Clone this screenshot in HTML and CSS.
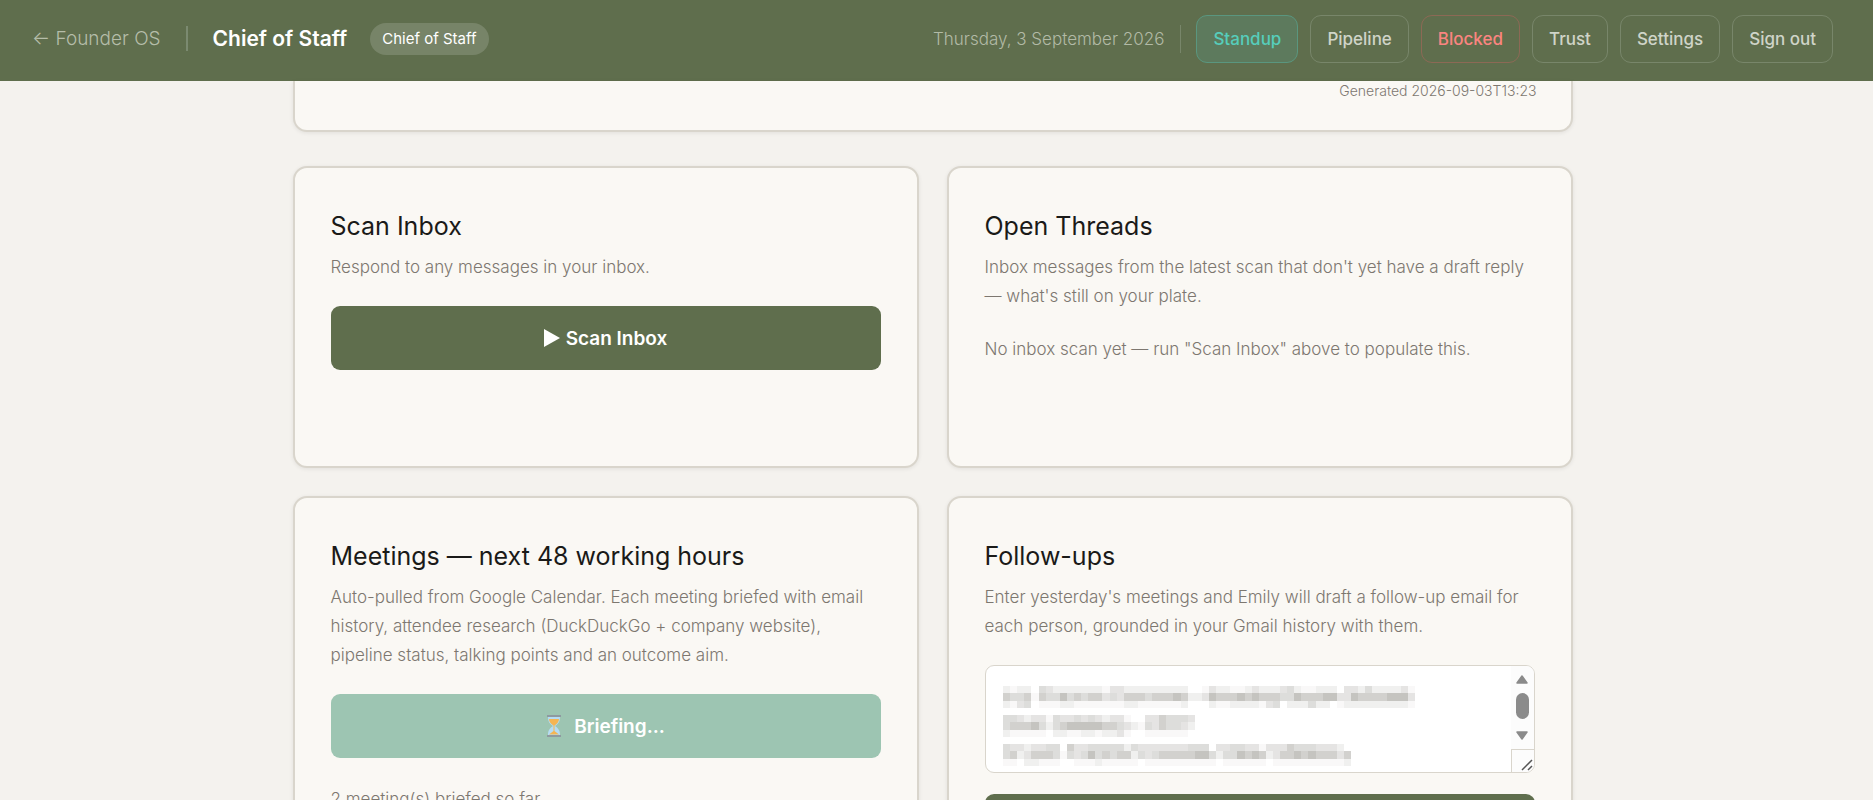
FILE: index.html
```
<!DOCTYPE html>
<html lang="en">
<head>
  <meta charset="utf-8">
  <title>Chief of Staff</title>
  <link rel="stylesheet" href="styles.css">
</head>
<body>
  <header class="topbar">
    <a class="back" href="#">← Founder OS</a>
    <span class="brand-divider"></span>
    <span class="brand">Chief of Staff</span>
    <span class="pill">Chief of Staff</span>
    <nav class="topnav">
      <span class="date">Thursday, 3 September 2026</span>
      <a class="nav-btn active" href="#">Standup</a>
      <a class="nav-btn" href="#">Pipeline</a>
      <a class="nav-btn blocked" href="#">Blocked</a>
      <a class="nav-btn" href="#">Trust</a>
      <a class="nav-btn" href="#">Settings</a>
      <button class="nav-btn" type="button">Sign out</button>
    </nav>
  </header>

  <main class="page">
    <section class="summary">
      <p class="generated">Generated 2026-09-03T13:23</p>
    </section>

    <div class="grid">
      <section class="card">
        <h2>Scan Inbox</h2>
        <p>Respond to any messages in your inbox.</p>
        <button class="btn" type="button">
          <svg width="16" height="18" viewBox="0 0 16 18" aria-hidden="true"><path d="M0 0L16 9L0 18Z" fill="#fff"/></svg>
          Scan Inbox
        </button>
      </section>

      <section class="card">
        <h2>Open Threads</h2>
        <p>Inbox messages from the latest scan that don't yet have a draft reply — what's still on your plate.</p>
        <p class="empty">No inbox scan yet — run "Scan Inbox" above to populate this.</p>
      </section>

      <section class="card">
        <h2>Meetings — next 48 working hours</h2>
        <p>Auto-pulled from Google Calendar. Each meeting briefed with email history, attendee research (DuckDuckGo + company website), pipeline status, talking points and an outcome aim.</p>
        <button class="btn busy" type="button" disabled>
          <svg width="16" height="22" viewBox="0 0 16 22" aria-hidden="true">
            <path d="M2 2H14C14 7 12 9 9 11C12 13 14 15 14 20H2C2 15 4 13 7 11C4 9 2 7 2 2Z" fill="#b5dcf5"/>
            <path d="M3 4H13C13 7 11 9 8.500 10.500V16L13 19.500H3L7.500 16V10.500C5 9 3 7 3 4Z" fill="#f5b553"/>
            <path d="M1 0H15V2H1ZM1 20H15V22H1Z" fill="#8e9aa0"/>
          </svg>
          Briefing...
        </button>
        <p class="status">2 meeting(s) briefed so far</p>
      </section>

      <section class="card">
        <h2>Follow-ups</h2>
        <p>Enter yesterday's meetings and Emily will draft a follow-up email for each person, grounded in your Gmail history with them.</p>
        <div class="notes">
          <textarea aria-label="Yesterday's meetings"></textarea>
          <div class="redacted" id="redacted"></div>
          <div class="scroll" aria-hidden="true">
            <svg width="12" height="9" viewBox="0 0 12 9"><path d="M6 1L11 8H1Z" fill="#8b8b8b" stroke="#8b8b8b" stroke-width="1.500" stroke-linejoin="round"/></svg>
            <span class="thumb"></span>
            <svg width="12" height="9" viewBox="0 0 12 9"><path d="M6 8L1 1H11Z" fill="#8b8b8b" stroke="#8b8b8b" stroke-width="1.500" stroke-linejoin="round"/></svg>
            <span class="grip">
              <svg width="12" height="12" viewBox="0 0 12 12"><path d="M1 11L11 1M7 11L11 7" stroke="#555" stroke-width="1.500"/></svg>
            </span>
          </div>
        </div>
        <button class="btn" type="button" aria-label="Draft follow-ups"></button>
      </section>
    </div>
  </main>
  <script src="redact.js"></script>
</body>
</html>
```
FILE: styles.css
```
* { box-sizing: border-box; }

body {
  margin: 0;
  height: 100vh;
  overflow: hidden;
  background: #f4f2ee;
  color: #1a1a18;
  font-family: Inter, "Liberation Sans", sans-serif;
  font-size: 17px;
  font-weight: 300;
}

h2, p { margin: 0; }
a { text-decoration: none; }
button, textarea { font: inherit; }

/* top bar */
.topbar {
  display: flex;
  align-items: center;
  height: 81px;
  padding: 0 40px 4px 32px;
  background: #5f6e4d;
  white-space: nowrap;
}
.back { color: #b5bda9; font-size: 19px; }
.brand-divider {
  width: 2px;
  height: 25px;
  margin: 0 25px;
  background: #7b8a70;
}
.brand { color: #fff; font-size: 21px; font-weight: 600; }
.pill {
  margin-left: 23px;
  padding: 0 12px;
  border-radius: 16px;
  background: #778468;
  color: #fff;
  font-size: 15px;
  font-weight: 400;
  line-height: 32px;
}
.topnav {
  display: flex;
  align-items: center;
  gap: 12px;
  margin-left: auto;
}
.date {
  margin-right: 3px;
  padding-right: 16px;
  border-right: 1px solid #78866a;
  color: #b2baa6;
  line-height: 28px;
}
.nav-btn {
  padding: 0 16px;
  border: 1px solid #78866a;
  border-radius: 11px;
  background: none;
  color: #cfd4c8;
  font-size: 17px;
  font-weight: 500;
  line-height: 46px;
}
.nav-btn.active { border-color: #5a967f; background: #5d7a5d; color: #56cdbb; }
.nav-btn.blocked { border-color: #8c6955; color: #fa8580; }

/* page */
.page {
  max-width: 1280px;
  margin: 0 auto;
  position: relative;
  right: 4px;
}
.summary {
  margin-bottom: 34px;
  padding: 0 34px 30px;
  border: 2px solid #d9d5cc;
  border-top: 0;
  border-radius: 0 0 14px 14px;
  background: #faf8f4;
  box-shadow: 0 1px 4px rgba(0, 0, 0, .08);
}
.generated {
  color: #7d7770;
  font-size: 14px;
  line-height: 19px;
  text-align: right;
}
.grid {
  display: grid;
  grid-template-columns: 1fr 1fr;
  grid-auto-rows: minmax(302px, auto);
  gap: 28px;
}
.card {
  padding: 36px;
  border: 2px solid #d9d5cc;
  border-radius: 14px;
  background: #faf8f4;
  box-shadow: 0 1px 4px rgba(0, 0, 0, .08);
}
.card h2 {
  margin-bottom: 5px;
  font-size: 25px;
  font-weight: 400;
  line-height: 44px;
}
.card p { color: #7d7770; line-height: 29px; }
.card .empty { margin-top: 24px; }
.card .status { margin-top: 27px; }

.btn {
  display: flex;
  align-items: center;
  justify-content: center;
  gap: 6px;
  width: 100%;
  height: 64px;
  margin-top: 24px;
  border: 0;
  border-radius: 9px;
  background: #5f6e4d;
  color: #fff;
  font-size: 19px;
  font-weight: 600;
}
.btn.busy { gap: 12px; background: #9dc5b2; }

/* follow-up notes */
.notes {
  position: relative;
  margin-top: 24px;
}
.notes textarea {
  display: block;
  width: 100%;
  height: 108px;
  padding: 16px;
  border: 1px solid #d9d5cc;
  border-radius: 9px;
  background: #fff;
  resize: none;
}
.notes + .btn { margin-top: 21px; }
.redacted {
  position: absolute;
  top: 21px;
  left: 18px;
  display: grid;
  gap: 7px;
  pointer-events: none;
}
.redacted svg { display: block; }
.scroll {
  position: absolute;
  top: 1px;
  right: 1px;
  bottom: 1px;
  width: 23px;
  padding-top: 9px;
  border-radius: 0 8px 8px 0;
  background: #fcfcfc;
  display: flex;
  flex-direction: column;
  align-items: center;
}
.thumb {
  width: 13px;
  height: 26px;
  margin: 9px 0 12px;
  border-radius: 7px;
  background: #8b8b8b;
}
.grip {
  display: flex;
  align-items: flex-end;
  justify-content: flex-end;
  width: 100%;
  height: 23px;
  margin-top: auto;
  padding: 1px;
  border: 1px solid #d9d5cc;
  border-width: 1px 0 0 1px;
}
```
FILE: redact.js
```
// Mosaic over the private notes: three rows of shade levels per line
var shades = ['#ffffff', '#f9f8f8', '#f0f0ef', '#e5e4e3', '#dddddb', '#d2d1ce', '#c5c4c0'];
var lines = [
  ['2122043222222213322222222200132211232223421122203324222231',
   '5445154464545534355545556522365556565554465556633655556663',
   '2134011122111111122111111200021122221340222422012222222221'],
  ['443233143343432331003354443',
   '455564245666665543214354432',
   '211111022112212231001111110'],
  ['4332334405334444424333333344403344331333544433320',
   '4523555414346454552434555556642446565235565655535',
   '1102211100111211111011111111110111111011111111112']
];
var box = document.getElementById('redacted');
box.innerHTML = lines.map(function(rows){
  var cells = '';
  rows.forEach(function(row, y){
    row.split('').forEach(function(level, x){
      if (level !== '0'){
        cells += '<rect x="' + x + '" y="' + y + '" width="1" height="1" fill="' + shades[level] + '"/>';
      }
    });
  });
  return '<svg width="412" height="22" viewBox="0 0 58 3" preserveAspectRatio="none" shape-rendering="crispEdges">' + cells + '</svg>';
}).join('');
```
